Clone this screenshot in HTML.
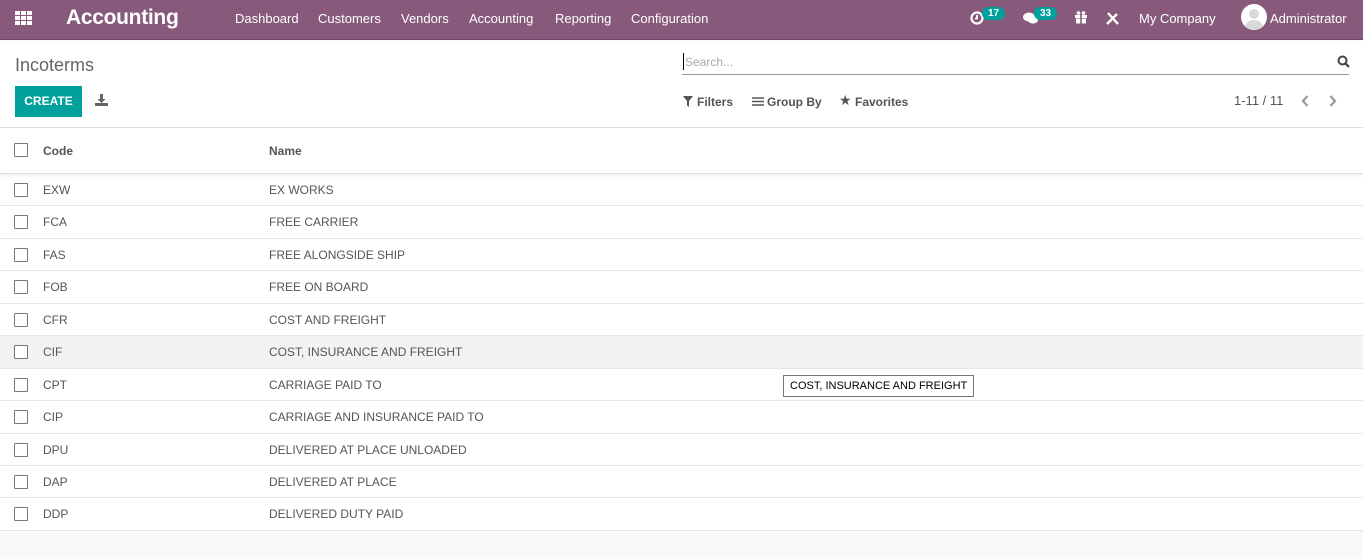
<!DOCTYPE html>
<html><head><meta charset="utf-8"><style>
*{box-sizing:border-box;margin:0;padding:0}
body{width:1363px;height:559px;overflow:hidden;background:#f9f9f9;font-family:"Liberation Sans",sans-serif;color:#555;position:relative}
.nav{position:absolute;left:0;top:0;width:1363px;height:40px;background:#875a7b;border-bottom:1px solid #6f4a65;color:#fff}
.nav span{position:absolute;top:11px;font-size:13px}
.cp{position:absolute;left:0;top:41px;width:1363px;height:87px;background:#fff;border-bottom:1px solid #ddd}
.tbl{position:absolute;left:0;top:128px;width:1363px;background:#fff}
.row{position:relative;height:32.45px;border-bottom:1px solid #e6e6e6;font-size:12px}
.row .c,.row .n{position:absolute;top:9px}
.c{left:43px}.n{left:269px}
.cb{position:absolute;left:14px;top:9px;width:14px;height:14px;border:1.5px solid #777;border-radius:1px;background:#fff}
.badge{position:absolute;background:#00a09d;color:#fff;font-size:10px;font-weight:bold;border-radius:9px;padding:1px 6px;top:7px}
</style></head><body>
<div class="nav">
<svg style="position:absolute;left:15px;top:11px" width="18" height="14" viewBox="0 0 18 14"><g fill="#fff"><rect x="0" y="0" width="5" height="4"/><rect x="6" y="0" width="5" height="4"/><rect x="12" y="0" width="5" height="4"/><rect x="0" y="5" width="5" height="4"/><rect x="6" y="5" width="5" height="4"/><rect x="12" y="5" width="5" height="4"/><rect x="0" y="10" width="5" height="4"/><rect x="6" y="10" width="5" height="4"/><rect x="12" y="10" width="5" height="4"/></g></svg>
<span style="left:66px;top:6px;font-size:21px;font-weight:bold;letter-spacing:-0.3px">Accounting</span>
<span style="left:235px">Dashboard</span><span style="left:318px">Customers</span><span style="left:401px">Vendors</span><span style="left:469px">Accounting</span><span style="left:555px">Reporting</span><span style="left:631px">Configuration</span>
<svg style="position:absolute;left:970px;top:11px" width="14" height="14" viewBox="0 0 14 14"><circle cx="7" cy="7" r="5.5" fill="none" stroke="#fff" stroke-width="2.2"/><path d="M7 4v3.5h-2" stroke="#fff" stroke-width="1.8" fill="none"/></svg>
<div class="badge" style="left:982px">17</div>
<svg style="position:absolute;left:1023px;top:11px" width="16" height="14" viewBox="0 0 16 14"><ellipse cx="6" cy="6" rx="6" ry="4.5" fill="#fff"/><ellipse cx="10" cy="9" rx="5" ry="3.5" fill="#fff"/></svg>
<div class="badge" style="left:1034px">33</div>
<svg style="position:absolute;left:1074px;top:11px" width="14" height="13" viewBox="0 0 14 13"><rect x="1" y="4" width="12" height="3" fill="#fff"/><rect x="2" y="7.5" width="10" height="5" fill="#fff"/><rect x="6.2" y="4" width="1.6" height="9" fill="#875a7b"/><circle cx="4.5" cy="2" r="1.8" fill="#fff"/><circle cx="9.5" cy="2" r="1.8" fill="#fff"/></svg>
<svg style="position:absolute;left:1106px;top:12px" width="13" height="13" viewBox="0 0 13 13"><path d="M1 12L11 2M2 1l10 11" stroke="#fff" stroke-width="2.4"/></svg>
<span style="left:1139px">My Company</span>
<svg style="position:absolute;left:1241px;top:4px" width="26" height="26" viewBox="0 0 26 26"><circle cx="13" cy="13" r="13" fill="#fff"/><circle cx="13" cy="10" r="5" fill="#d9d9d9"/><path d="M4 22c2-5 6-6 9-6s7 1 9 6a13 13 0 0 1-18 0z" fill="#d9d9d9"/></svg>
<span style="left:1270px">Administrator</span>
</div>
<div class="cp">
<div style="position:absolute;left:15px;top:14px;font-size:18px;color:#666">Incoterms</div>
<div style="position:absolute;left:15px;top:45px;width:67px;height:31px;background:#00a09d;color:#fff;font-size:12px;font-weight:bold;text-align:center;line-height:31px">CREATE</div>
<svg style="position:absolute;left:95px;top:53px" width="13" height="12" viewBox="0 0 13 12"><path d="M5 0h3v5h2.5L6.5 9 2.5 5H5z" fill="#666"/><rect x="0" y="9" width="13" height="3" fill="#666"/></svg>
<div style="position:absolute;left:682px;top:11px;width:667px;height:23px;border-bottom:1px solid #999"></div>
<div style="position:absolute;left:683px;top:12px;width:1px;height:17px;background:#000"></div>
<div style="position:absolute;left:685px;top:14px;font-size:12px;color:#aaa">Search...</div>
<svg style="position:absolute;left:1337px;top:14px" width="13" height="13" viewBox="0 0 13 13"><circle cx="5.5" cy="5.5" r="4" fill="none" stroke="#444" stroke-width="2"/><path d="M8.5 8.5l3.5 3.5" stroke="#444" stroke-width="2.2"/></svg>
<svg style="position:absolute;left:683px;top:55px" width="10" height="11" viewBox="0 0 10 11"><path d="M0 0h10L6 5v6L4 9.5V5z" fill="#555"/></svg>
<span style="position:absolute;left:697px;top:54px;font-size:12px;font-weight:bold;color:#555">Filters</span>
<svg style="position:absolute;left:752px;top:56px" width="12" height="9" viewBox="0 0 12 9"><path d="M0 1h12M0 4.5h12M0 8h12" stroke="#555" stroke-width="1.6"/></svg>
<span style="position:absolute;left:767px;top:54px;font-size:12px;font-weight:bold;color:#555">Group By</span>
<span style="position:absolute;left:839px;top:51px;font-size:14px;color:#555">&#9733;</span>
<span style="position:absolute;left:855px;top:54px;font-size:12px;font-weight:bold;color:#555">Favorites</span>
<span style="position:absolute;left:1234px;top:52px;font-size:13px;color:#555">1-11 / 11</span>
<svg style="position:absolute;left:1301px;top:54px" width="8" height="12" viewBox="0 0 8 12"><path d="M6.5 1L2 6l4.5 5" stroke="#999" stroke-width="2.2" fill="none"/></svg>
<svg style="position:absolute;left:1329px;top:54px" width="8" height="12" viewBox="0 0 8 12"><path d="M1.5 1L6 6l-4.5 5" stroke="#999" stroke-width="2.2" fill="none"/></svg>
</div>
<div class="tbl">
<div class="row" style="height:46px;border-bottom:1px solid #ddd;box-shadow:0 2px 3px rgba(0,0,0,.06);font-weight:bold;color:#555">
<div class="cb" style="top:15px"></div><span class="c" style="top:16px">Code</span><span class="n" style="top:16px">Name</span></div>
<div class="row"><div class="cb"></div><span class="c">EXW</span><span class="n">EX WORKS</span></div>
<div class="row"><div class="cb"></div><span class="c">FCA</span><span class="n">FREE CARRIER</span></div>
<div class="row"><div class="cb"></div><span class="c">FAS</span><span class="n">FREE ALONGSIDE SHIP</span></div>
<div class="row"><div class="cb"></div><span class="c">FOB</span><span class="n">FREE ON BOARD</span></div>
<div class="row"><div class="cb"></div><span class="c">CFR</span><span class="n">COST AND FREIGHT</span></div>
<div class="row" style="background:#f2f2f2"><div class="cb"></div><span class="c">CIF</span><span class="n">COST, INSURANCE AND FREIGHT</span></div>
<div class="row"><div class="cb"></div><span class="c">CPT</span><span class="n">CARRIAGE PAID TO</span></div>
<div class="row"><div class="cb"></div><span class="c">CIP</span><span class="n">CARRIAGE AND INSURANCE PAID TO</span></div>
<div class="row"><div class="cb"></div><span class="c">DPU</span><span class="n">DELIVERED AT PLACE UNLOADED</span></div>
<div class="row"><div class="cb"></div><span class="c">DAP</span><span class="n">DELIVERED AT PLACE</span></div>
<div class="row"><div class="cb"></div><span class="c">DDP</span><span class="n">DELIVERED DUTY PAID</span></div>
</div>
<div style="position:absolute;left:783px;top:375px;width:191px;height:22px;border:1px solid #767676;background:#fff;font-size:11px;color:#000;line-height:20px;padding-left:6px;white-space:nowrap">COST, INSURANCE AND FREIGHT</div>
</body></html>
